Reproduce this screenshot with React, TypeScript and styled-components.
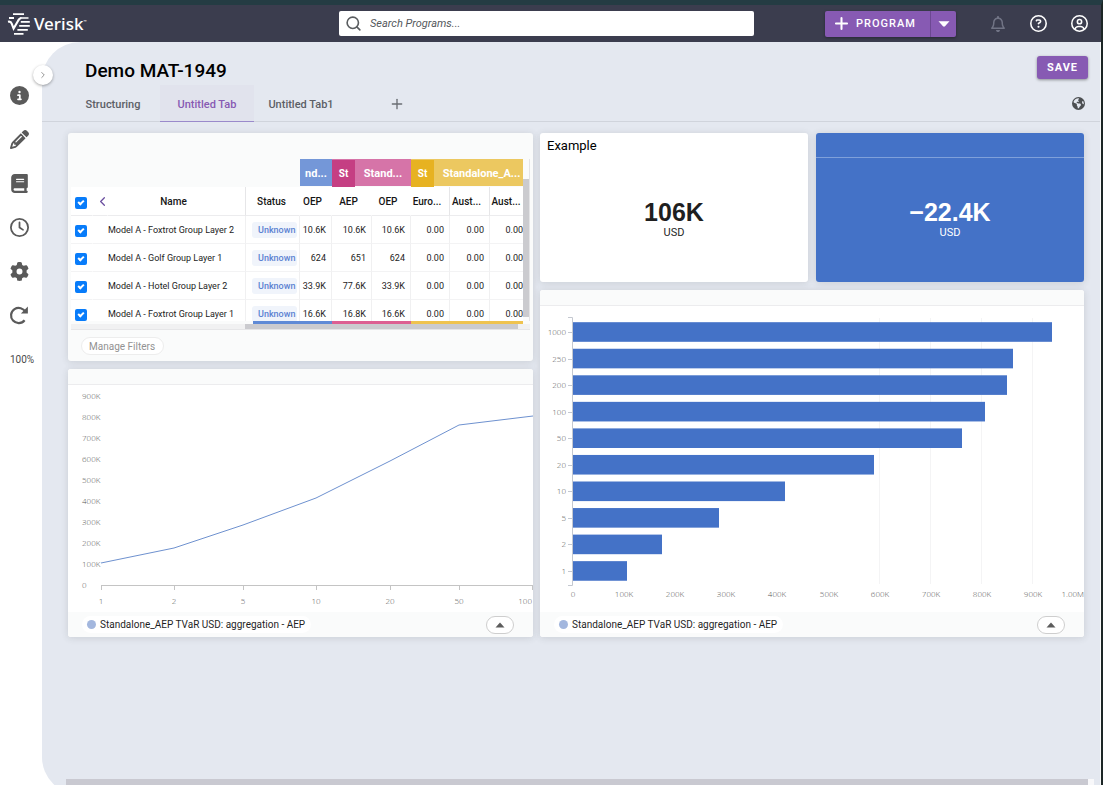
import React from "react";
import styled, { createGlobalStyle, css } from "styled-components";
import {
  FaCircleInfo,
  FaPencil,
  FaBook,
  FaRegClock,
  FaGear,
  FaRegBell,
  FaRegCircleQuestion,
  FaRegCircleUser,
  FaEarthAmericas,
} from "react-icons/fa6";
import { ChevronLeft, ChevronRight, Plus, Search } from "lucide-react";

const BLUE = "#4472c7";
const PURPLE = "#875ab3";

const GlobalStyle = createGlobalStyle`
  *, *::before, *::after { box-sizing: border-box; }
  body {
    margin: 0;
    background: #ffffff;
    font-family: Roboto, "Liberation Sans", sans-serif;
    color: #1f1f1f;
  }
  button, input { font-family: inherit; }
  button { border: 0; padding: 0; background: none; cursor: pointer; }
  svg { display: block; }
`;

const Frame = styled.div`
  height: 100vh;
  display: flex;
  flex-direction: column;
  overflow: hidden;
  border-top: 5px solid #243c43;
  border-right: 2px solid #1c2626;
`;

/* ---------- header ---------- */

const Header = styled.header`
  flex: none;
  height: 37px;
  display: grid;
  grid-template-columns: 1fr minmax(0, 415px) 1fr;
  align-items: center;
  padding: 0 13px 0 5px;
  background: #3b3d4e;
  color: #ffffff;
`;

const Brand = styled.a`
  display: flex;
  align-items: center;
  gap: 4px;
  color: inherit;
  text-decoration: none;
  font: 500 17px/20px "Noto Sans", sans-serif;
  sup { font-size: 4px; line-height: 4px; margin: 0 0 4px -4px; }
`;

const SearchBox = styled.label`
  height: 25px;
  display: flex;
  align-items: center;
  gap: 8px;
  padding: 0 6px;
  border-radius: 2px;
  background: #ffffff;
  color: #5a5d60;
`;

const SearchInput = styled.input`
  flex: 1;
  min-width: 0;
  padding: 0;
  border: 0;
  outline: 0;
  background: none;
  font-size: 11px;
  font-style: italic;
  color: #55585c;
  &::placeholder { color: #55585c; opacity: 1; }
`;

const HeaderActions = styled.div`
  display: flex;
  align-items: center;
  justify-content: flex-end;
  gap: 24px;
`;

const SplitButton = styled.div`
  display: flex;
  height: 26px;
  margin-right: 10px;
  border-radius: 2px;
  background: ${PURPLE};
  box-shadow: 0 1px 3px rgba(0, 0, 0, 0.35);
`;

const ProgramButton = styled.button`
  display: flex;
  align-items: center;
  gap: 5px;
  width: 106px;
  padding-left: 7px;
  border-right: 1px solid #6c4892;
  color: #ffffff;
  font-size: 11px;
  font-weight: 500;
  letter-spacing: 1px;
`;

const CaretButton = styled.button`
  width: 25px;
  display: grid;
  place-items: center;
  color: #ffffff;
`;

const IconButton = styled.button<{ $muted?: boolean }>`
  display: grid;
  place-items: center;
  color: ${(p) => (p.$muted ? "#717485" : "#ffffff")};
`;

/* ---------- shell ---------- */

const Shell = styled.div`
  flex: 1;
  min-height: 0;
  display: flex;
  background: #ffffff;
`;

const Sidebar = styled.nav`
  position: relative;
  flex: none;
  width: 42px;
  display: flex;
  flex-direction: column;
  align-items: center;
  padding: 31px 4px 0 0;
`;

const SideButton = styled.button`
  width: 38px;
  height: 44px;
  display: grid;
  place-items: center;
  color: #5a5a5a;
`;

const Zoom = styled.span`
  padding: 1px 0 0 6px;
  font-size: 10px;
  line-height: 44px;
  color: #4a4a4a;
`;

const Expand = styled.button`
  position: absolute;
  z-index: 1;
  top: 23px;
  right: -11px;
  width: 20px;
  height: 20px;
  display: grid;
  place-items: center;
  border-radius: 50%;
  background: #ffffff;
  color: #808080;
  box-shadow: 0 1px 3px rgba(0, 0, 0, 0.35);
`;

const Main = styled.main`
  flex: 1;
  min-width: 0;
  display: flex;
  flex-direction: column;
  margin-bottom: -10px;
  border-right: 1px solid #f6f8f8;
  border-radius: 38px 0 0 38px;
  background: #e4e8f0;
`;

const TitleRow = styled.div`
  height: 43px;
  display: flex;
  align-items: center;
  justify-content: space-between;
  padding: 14px 12px 0 43px;
`;

const Title = styled.h1`
  margin: 0;
  font-size: 19px;
  font-weight: 500;
  line-height: 24px;
  color: #000000;
`;

const SaveButton = styled.button`
  width: 51px;
  height: 23px;
  margin-top: -7px;
  border-radius: 3px;
  background: ${PURPLE};
  color: #ffffff;
  font-size: 11px;
  font-weight: 700;
  letter-spacing: 1px;
  box-shadow: 0 1px 3px rgba(0, 0, 0, 0.4);
`;

const TabRow = styled.div`
  height: 37px;
  display: flex;
  align-items: stretch;
  padding: 0 15px 0 24px;
  border-bottom: 1px solid #d0d4dc;
  color: #55585e;
`;

const Tabs = styled.div`
  display: flex;
  margin-bottom: -1px;
`;

const Tab = styled.button<{ $active?: boolean }>`
  width: 94px;
  padding-top: 2px;
  font-size: 11px;
  font-weight: 500;
  color: #5c5f66;
  border-bottom: 1px solid transparent;
  ${(p) =>
    p.$active &&
    css`
      background: #e1e3ed;
      color: ${PURPLE};
      border-bottom-color: #9a8acb;
    `}
`;

const AddTab = styled.button`
  width: 98px;
  display: grid;
  place-items: center;
  color: #6a6d73;
`;

const GlobeButton = styled.button`
  margin-left: auto;
  color: #4c4f52;
`;

/* ---------- dashboard ---------- */

const Dashboard = styled.div`
  flex: 1;
  display: grid;
  grid-template-columns: 465fr 544fr;
  align-items: start;
  gap: 7px;
  padding: 11px 16px 0 26px;
`;

const Column = styled.div`
  min-width: 0;
  display: flex;
  flex-direction: column;
  gap: 8px;
`;

const KpiRow = styled.div`
  display: grid;
  grid-template-columns: 1fr 1fr;
  gap: 8px;
`;

const Card = styled.section`
  overflow: hidden;
  border-radius: 3px;
  background: #ffffff;
  box-shadow: 0 1px 7px rgba(60, 70, 70, 0.16);
`;

const KpiCard = styled(Card)<{ $filled?: boolean }>`
  height: 149px;
  display: flex;
  flex-direction: column;
  background: ${(p) => (p.$filled ? BLUE : "#ffffff")};
  color: ${(p) => (p.$filled ? "#ffffff" : "#1f1f1f")};
`;

const KpiHead = styled.h2<{ $filled?: boolean }>`
  flex: none;
  height: 25px;
  margin: 0;
  padding: 1px 7px 0;
  font-size: 13px;
  font-weight: 400;
  line-height: 24px;
  color: #000000;
  border-bottom: 1px solid ${(p) => (p.$filled ? "#7fa0da" : "transparent")};
`;

const KpiBody = styled.div`
  flex: 1;
  display: flex;
  flex-direction: column;
  align-items: center;
  padding-top: 40px;
`;

const KpiValue = styled.strong`
  font: 700 25px/28px "Liberation Sans", sans-serif;
`;

const KpiUnit = styled.span`
  font-size: 11px;
  line-height: 14px;
`;

const CardHead = styled.div`
  height: 16px;
  background: #fafbfb;
  border-bottom: 1px solid #ececee;
`;

const CardFoot = styled.footer`
  height: 25px;
  display: flex;
  align-items: center;
  justify-content: space-between;
  padding: 0 19px 0 14px;
  background: #fafbfb;
`;

const Legend = styled.span`
  display: flex;
  align-items: center;
  gap: 4px;
  height: 17px;
  padding: 0 6px 0 5px;
  border-radius: 9px;
  background: #ffffff;
  font-size: 10px;
  color: #1f1f1f;
  &::before {
    content: "";
    width: 9px;
    height: 9px;
    border-radius: 50%;
    background: #a3b7de;
  }
`;

const PillButton = styled.button`
  width: 28px;
  height: 18px;
  display: grid;
  place-items: center;
  border: 1px solid #cecece;
  border-radius: 9px;
  background: #ffffff;
  color: #5c5c5c;
`;

const Chart = styled.svg`
  width: 100%;
  height: auto;
  text {
    font: 300 8px "Open Sans", sans-serif;
    fill: #555555;
  }
`;

/* ---------- table ---------- */

const TableCard = styled(Card)`
  height: 228px;
  padding: 26px 3px 0 3px;
  background: #fafbfb;
`;

const TableArea = styled.div`
  display: flex;
  border-right: 1px solid #e4e4e6;
`;

const TableClip = styled.div`
  flex: 1;
  min-width: 0;
  height: 162px;
  overflow: hidden;
`;

const Table = styled.table`
  width: 458px;
  table-layout: fixed;
  border-collapse: separate;
  border-spacing: 0;
  font-size: 9px;
`;

const Blank = styled.td`
  padding: 0;
`;

const GroupHead = styled.th<{ $color: string }>`
  height: 28px;
  padding: 0;
  background: linear-gradient(${(p) => p.$color}, ${(p) => p.$color}) 0 0 / 100% 27px no-repeat;
  color: #ffffff;
  font-size: 11px;
  font-weight: 700;
`;

const GroupInner = styled.div`
  display: flex;
  height: 27px;
  line-height: 27px;
  overflow: hidden;
  white-space: nowrap;
`;

const GroupTag = styled.span<{ $color: string }>`
  flex: none;
  width: 23px;
  background: ${(p) => p.$color};
  font-size: 10px;
`;

const GroupLabel = styled.span`
  flex: 1;
  text-align: center;
`;

const HeadCell = styled.th<{ $edge?: boolean }>`
  height: 29px;
  padding: 0 6px 0 0;
  background: #ffffff;
  border-bottom: 1px solid #ececee;
  border-right: 1px solid ${(p) => (p.$edge ? "#e6e6e8" : "transparent")};
  font-size: 10px;
  font-weight: 500;
  text-align: center;
  color: #151515;
`;

const StatusHead = styled(HeadCell)`
  padding: 0 2px 0 0;
`;

const Cell = styled.td<{ $align?: string; $edge?: boolean }>`
  height: 28px;
  padding: 0 5px 0 0;
  overflow: hidden;
  white-space: nowrap;
  background: #ffffff;
  border-bottom: 1px solid #f3f3f4;
  border-right: 1px solid ${(p) => (p.$edge ? "#f0f0f1" : "transparent")};
  text-align: ${(p) => p.$align || "right"};
  color: #1c1c1c;
`;

const NameCell = styled(Cell)`
  padding: 0 0 0 15px;
`;

const StatusCell = styled(Cell)`
  padding: 0 2px 0 6px;
`;

const StatusPill = styled.span`
  display: block;
  height: 16px;
  padding-left: 6px;
  border-radius: 3px;
  background: #f0f4fb;
  color: #5c82d2;
  font-weight: 500;
  line-height: 16px;
`;

const Check = styled.input`
  appearance: none;
  display: block;
  position: relative;
  width: 12px;
  height: 12px;
  margin: 3px 0 0 4px;
  border-radius: 2px;
  background: #087cfa;
  &::after {
    content: "";
    position: absolute;
    left: 3px;
    top: 3px;
    width: 6px;
    height: 4px;
    border-left: 2px solid #ffffff;
    border-bottom: 2px solid #ffffff;
    transform: rotate(-45deg);
  }
`;

const BackButton = styled.button`
  display: block;
  margin-left: 2px;
  color: #6b4fa0;
`;

const VScroll = styled.div`
  flex: none;
  width: 6px;
  padding-top: 20px;
  &::before {
    content: "";
    display: block;
    height: 138px;
    background: #cbcbcf;
  }
`;

const ColourStrip = styled.div`
  display: grid;
  grid-template-columns: 79px 79px 1fr;
  height: 3px;
  margin: 0 7px 0 182px;
`;

const StripPart = styled.span<{ $color: string }>`
  background: ${(p) => p.$color};
`;

const HScroll = styled.div`
  height: 6px;
  padding: 0 12px 0 174px;
  background: #f1f1f2;
  border-bottom: 1px solid #e6e6e8;
  &::before {
    content: "";
    display: block;
    height: 5px;
    background: #cbcbcf;
  }
`;

const FilterButton = styled.button`
  height: 18px;
  margin: 7px 0 0 10px;
  padding: 1px 8px 0 7px;
  border: 1px solid #ededed;
  border-radius: 9px;
  background: #ffffff;
  color: #929292;
  font-size: 10px;
  line-height: 16px;
`;

const PageScroll = styled.div`
  height: 16px;
  margin: 0 6px 0 24px;
  border-right: 6px solid #f8f8fa;
  background: #c9c9d1;
`;

/* ---------- data ---------- */

const rows = [
  { name: "Model A - Foxtrot Group Layer 2", values: ["10.6K", "10.6K", "10.6K", "0.00", "0.00", "0.00"] },
  { name: "Model A - Golf Group Layer 1", values: ["624", "651", "624", "0.00", "0.00", "0.00"] },
  { name: "Model A - Hotel Group Layer 2", values: ["33.9K", "77.6K", "33.9K", "0.00", "0.00", "0.00"] },
  { name: "Model A - Foxtrot Group Layer 1", values: ["16.6K", "16.8K", "16.6K", "0.00", "0.00", "0.00"] },
];

const columnWidths = [22, 15, 138, 54, 32, 40, 39, 39, 40, 39];
const heads = ["OEP", "AEP", "OEP", "Euro...", "Aust...", "Aust..."];

const linePoints = [
  { x: 33, y: 178, label: "1" },
  { x: 106, y: 163, label: "2" },
  { x: 175, y: 140, label: "5" },
  { x: 248, y: 113, label: "10" },
  { x: 322, y: 76, label: "20" },
  { x: 391, y: 40, label: "50" },
  { x: 465, y: 31, label: "100" },
];

const bars = [
  { label: "1000", width: 479 },
  { label: "250", width: 440 },
  { label: "200", width: 434 },
  { label: "100", width: 412 },
  { label: "50", width: 389 },
  { label: "20", width: 301 },
  { label: "10", width: 212 },
  { label: "5", width: 146 },
  { label: "2", width: 89 },
  { label: "1", width: 54 },
];

/* ---------- parts ---------- */

const Logo = () => (
  <svg width="25" height="24" viewBox="0 0 25 24" fill="none" stroke="#ffffff" strokeWidth="1.7" aria-hidden="true">
    <path d="M8 2.2h11M9 21.8h9.5M15.8 9.9h9M14.2 13.9h10.6M12.4 17.9h10.4M15.5 6h8" />
    <path d="M4 6h5M3 9.8c2-.5 3.2.3 3.8 2l1.8 4.8 4.2-7.4c1-2 2-3.2 3.6-3.2" strokeWidth="2.1" />
  </svg>
);

const RefreshIcon = () => (
  <svg width="20" height="20" viewBox="0 0 20 20" fill="none" aria-hidden="true">
    <path d="M16.6 7.4A7.6 7.6 0 1 0 15.6 15.2" stroke="currentColor" strokeWidth="2.2" />
    <path d="M18.9 1.6v7h-7z" fill="currentColor" />
  </svg>
);

const Caret = ({ up }: { up?: boolean }) => (
  <svg width="12" height="6" viewBox="0 0 12 6" fill="currentColor" aria-hidden="true">
    <path d={up ? "M1.5 5.5 6 .4l4.5 5.1z" : "M.5.3h11L7 5.2q-1 .9-2 0z"} />
  </svg>
);

const LineChart = () => (
  <Chart viewBox="0 0 465 227" role="img" aria-label="Standalone_AEP TVaR line chart">
    {[900, 800, 700, 600, 500, 400, 300, 200, 100, 0].map((v, i) => (
      <text key={v} x="14" y={14 + i * 21}>
        {v ? `${v}K` : "0"}
      </text>
    ))}
    <path d="M33 200.5H465" stroke="#c4c4c4" />
    {linePoints.map((p) => (
      <g key={p.label}>
        <path d={`M${Math.min(p.x, 464) + 0.5} 200v5`} stroke="#c4c4c4" />
        <text x={Math.min(p.x, 464)} y="219" textAnchor={p.x > 460 ? "end" : "middle"}>
          {p.label}
        </text>
      </g>
    ))}
    <polyline
      points={linePoints.map((p) => `${p.x},${p.y}`).join(" ")}
      fill="none"
      stroke="#6e91cf"
      strokeWidth="1"
    />
  </Chart>
);

const BarChart = () => (
  <Chart viewBox="0 0 544 306" role="img" aria-label="Standalone_AEP TVaR bar chart">
    {[6, 7, 8, 9].map((n) => (
      <path key={n} d={`M${Math.round(32 + n * 51.1) + 0.5} 12v266`} stroke="#f4f4f5" />
    ))}
    <path d="M28 11.5h4.5V279.5H28" fill="none" stroke="#c4c8d0" />
    {bars.map((b, i) => (
      <g key={b.label}>
        <path d={`M28 ${Math.round(26 + i * 26.55) + 0.5}h4`} stroke="#c4c8d0" />
        <rect x="33" y={16.2 + i * 26.55} width={b.width} height="19.6" fill={BLUE} />
        <text x="26" y={Math.round(29 + i * 26.55)} textAnchor="end">
          {b.label}
        </text>
      </g>
    ))}
    {[0, 1, 2, 3, 4, 5, 6, 7, 8, 9, 10].map((n) => (
      <text key={n} x={n === 10 ? 544 : Math.round(33 + n * 51.1)} y="291" textAnchor={n === 10 ? "end" : "middle"}>
        {n === 0 ? "0" : n === 10 ? "1.00M" : `${n}00K`}
      </text>
    ))}
  </Chart>
);

const ChartFooter = () => (
  <CardFoot>
    <Legend>Standalone_AEP TVaR USD: aggregation - AEP</Legend>
    <PillButton aria-label="Expand legend">
      <Caret up />
    </PillButton>
  </CardFoot>
);

const ResultsTable = () => (
  <TableCard>
    <TableArea>
      <TableClip>
        <Table>
          <colgroup>
            {columnWidths.map((w, i) => (
              <col key={i} width={w} />
            ))}
          </colgroup>
          <thead>
            <tr>
              <Blank colSpan={4} />
              <GroupHead $color="#7497d8">
                <GroupInner>
                  <GroupLabel>nd...</GroupLabel>
                </GroupInner>
              </GroupHead>
              <GroupHead colSpan={2} $color="#d674a8">
                <GroupInner>
                  <GroupTag $color="#c53f83">St</GroupTag>
                  <GroupLabel>Stand...</GroupLabel>
                </GroupInner>
              </GroupHead>
              <GroupHead colSpan={3} $color="#ecc860">
                <GroupInner>
                  <GroupTag $color="#e7b221">St</GroupTag>
                  <GroupLabel>Standalone_A...</GroupLabel>
                </GroupInner>
              </GroupHead>
            </tr>
            <tr>
              <HeadCell>
                <Check type="checkbox" defaultChecked aria-label="Select all" />
              </HeadCell>
              <HeadCell>
                <BackButton aria-label="Collapse columns">
                  <ChevronLeft size={15} strokeWidth={2} />
                </BackButton>
              </HeadCell>
              <HeadCell $edge>Name</HeadCell>
              <StatusHead>Status</StatusHead>
              {heads.map((h, i) => (
                <HeadCell key={i} $edge={i > 2}>
                  {h}
                </HeadCell>
              ))}
            </tr>
          </thead>
          <tbody>
            {rows.map((r) => (
              <tr key={r.name}>
                <Cell>
                  <Check type="checkbox" defaultChecked aria-label={r.name} />
                </Cell>
                <NameCell colSpan={2} $align="left" $edge>
                  {r.name}
                </NameCell>
                <StatusCell $align="left" $edge>
                  <StatusPill>Unknown</StatusPill>
                </StatusCell>
                {r.values.map((v, i) => (
                  <Cell key={i} $edge>
                    {v}
                  </Cell>
                ))}
              </tr>
            ))}
          </tbody>
        </Table>
      </TableClip>
      <VScroll />
    </TableArea>
    <ColourStrip>
      <StripPart $color="#5f8ad6" />
      <StripPart $color="#dd5f92" />
      <StripPart $color="#efc34f" />
    </ColourStrip>
    <HScroll />
    <FilterButton>Manage Filters</FilterButton>
  </TableCard>
);

export default function App() {
  return (
    <>
      <GlobalStyle />
      <Frame>
        <Header>
          <Brand href="#">
            <Logo />
            Verisk<sup>™</sup>
          </Brand>
          <SearchBox>
            <Search size={17} strokeWidth={2.3} aria-hidden="true" />
            <SearchInput type="search" aria-label="Search programs" placeholder="Search Programs..." />
          </SearchBox>
          <HeaderActions>
            <SplitButton>
              <ProgramButton>
                <Plus size={19} strokeWidth={2.6} />
                PROGRAM
              </ProgramButton>
              <CaretButton aria-label="More program actions">
                <Caret />
              </CaretButton>
            </SplitButton>
            <IconButton $muted aria-label="Notifications">
              <FaRegBell size={16} />
            </IconButton>
            <IconButton aria-label="Help">
              <FaRegCircleQuestion size={17} />
            </IconButton>
            <IconButton aria-label="Account">
              <FaRegCircleUser size={17} />
            </IconButton>
          </HeaderActions>
        </Header>
        <Shell>
          <Sidebar>
            <Expand aria-label="Expand sidebar">
              <ChevronRight size={10} strokeWidth={2} />
            </Expand>
            <SideButton aria-label="Information"><FaCircleInfo size={19} /></SideButton>
            <SideButton aria-label="Edit"><FaPencil size={19} /></SideButton>
            <SideButton aria-label="Library"><FaBook size={19} /></SideButton>
            <SideButton aria-label="History"><FaRegClock size={19} /></SideButton>
            <SideButton aria-label="Settings"><FaGear size={19} /></SideButton>
            <SideButton aria-label="Refresh"><RefreshIcon /></SideButton>
            <Zoom>100%</Zoom>
          </Sidebar>
          <Main>
            <TitleRow>
              <Title>Demo MAT-1949</Title>
              <SaveButton>SAVE</SaveButton>
            </TitleRow>
            <TabRow>
              <Tabs>
                <Tab>Structuring</Tab>
                <Tab $active>Untitled Tab</Tab>
                <Tab>Untitled Tab1</Tab>
                <AddTab aria-label="Add tab">
                  <Plus size={16} strokeWidth={2} />
                </AddTab>
              </Tabs>
              <GlobeButton aria-label="Region">
                <FaEarthAmericas size={13} />
              </GlobeButton>
            </TabRow>
            <Dashboard>
              <Column>
                <ResultsTable />
                <Card>
                  <CardHead />
                  <LineChart />
                  <ChartFooter />
                </Card>
              </Column>
              <Column>
                <KpiRow>
                  <KpiCard>
                    <KpiHead>Example</KpiHead>
                    <KpiBody>
                      <KpiValue>106K</KpiValue>
                      <KpiUnit>USD</KpiUnit>
                    </KpiBody>
                  </KpiCard>
                  <KpiCard $filled>
                    <KpiHead $filled />
                    <KpiBody>
                      <KpiValue>−22.4K</KpiValue>
                      <KpiUnit>USD</KpiUnit>
                    </KpiBody>
                  </KpiCard>
                </KpiRow>
                <Card>
                  <CardHead />
                  <BarChart />
                  <ChartFooter />
                </Card>
              </Column>
            </Dashboard>
            <PageScroll />
          </Main>
        </Shell>
      </Frame>
    </>
  );
}
